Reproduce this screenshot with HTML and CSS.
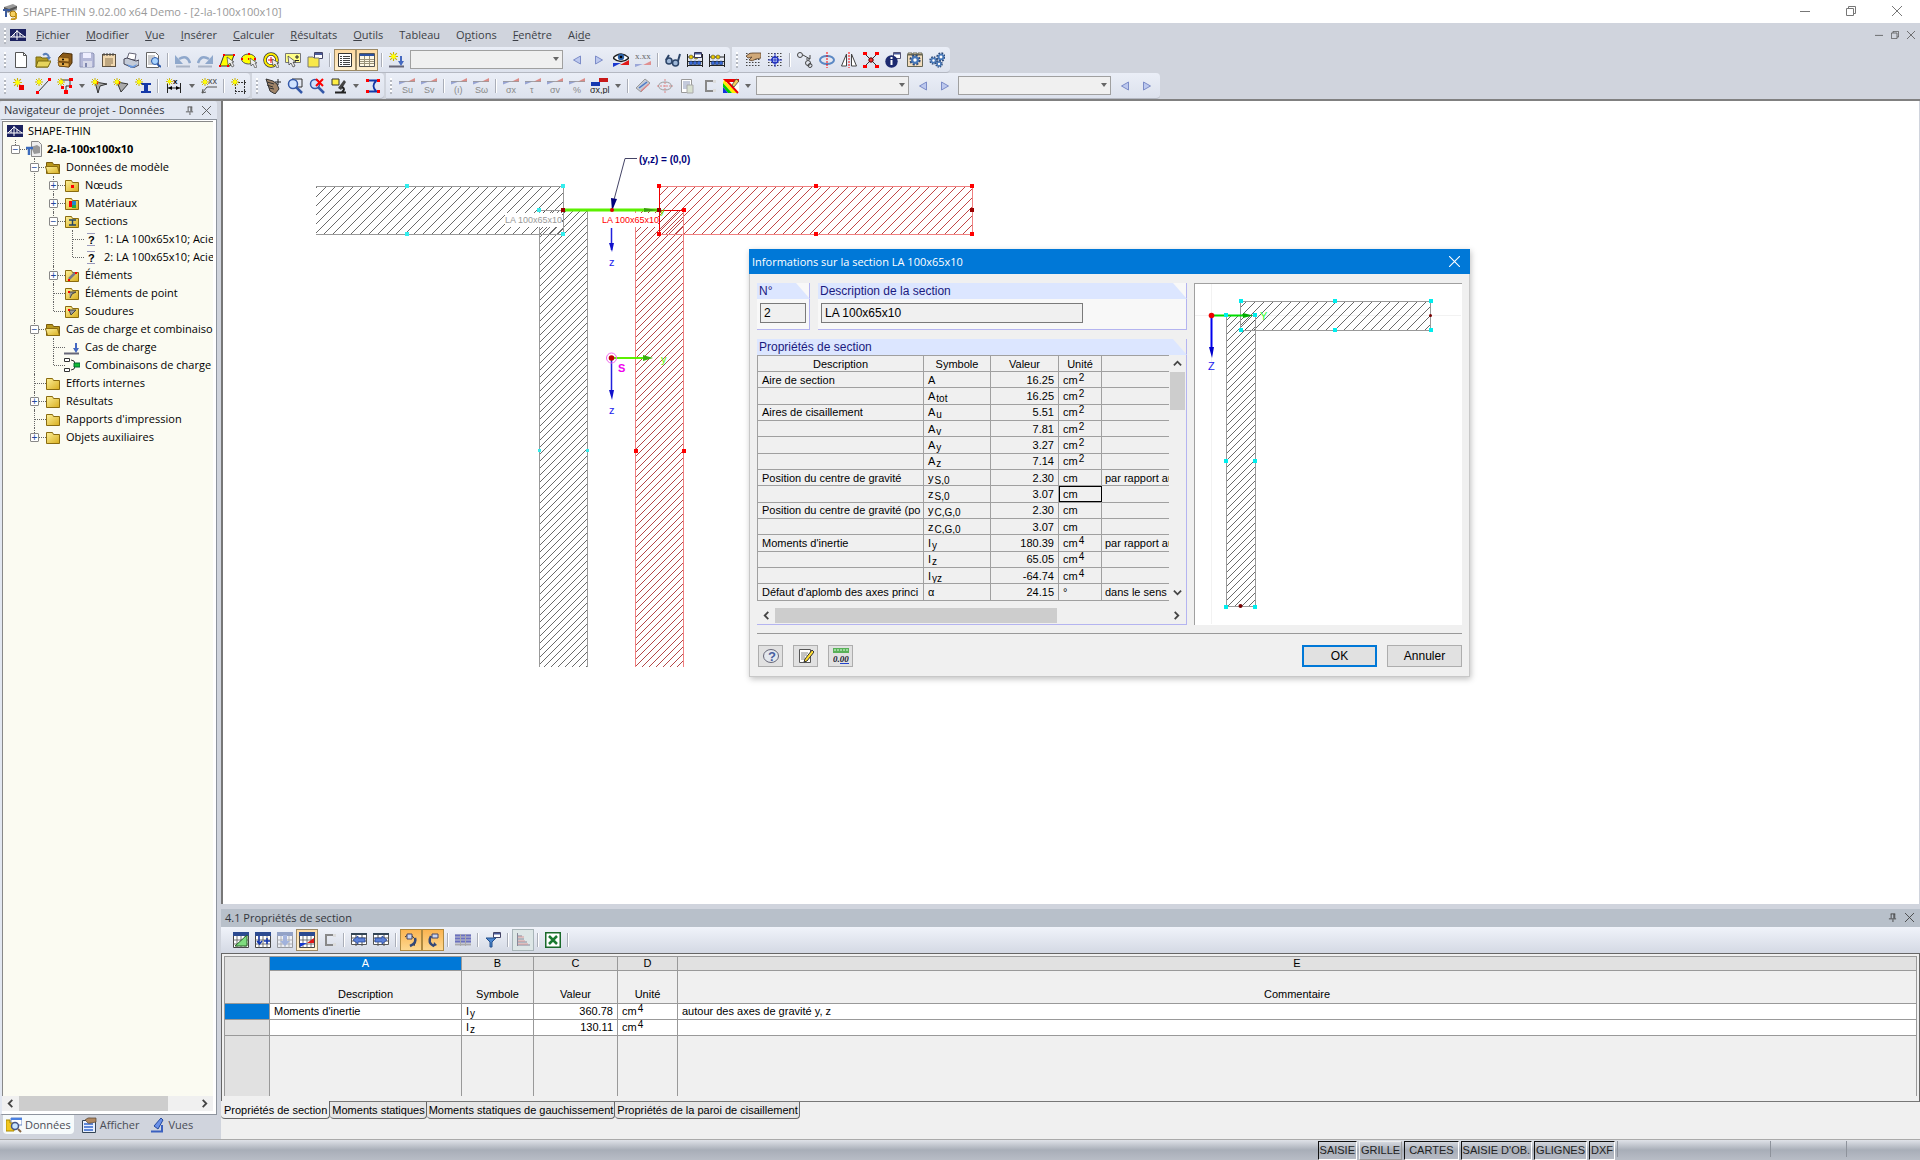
FILE: index.html
```html
<!DOCTYPE html>
<html lang="fr">
<head>
<meta charset="utf-8">
<title>SHAPE-THIN 9.02.00 x64 Demo - [2-la-100x100x10]</title>
<link rel="stylesheet" href="styles.css">
</head>
<body>
<svg class="paints" aria-hidden="true">
<defs>
<linearGradient id="gold" x1="0" y1="0" x2="1" y2="1"><stop offset="0" stop-color="#fdf09a"/><stop offset="1" stop-color="#d8ae1e"/></linearGradient>
<pattern id="hTop" width="9" height="9" patternUnits="userSpaceOnUse"><path d="M-1 1L1-1M0 9L9 0M8 10L10 8" stroke="#444" stroke-width=".8"/></pattern>
<pattern id="hSide" width="7" height="7" patternUnits="userSpaceOnUse"><path d="M-1 1L1-1M0 7L7 0M6 8L8 6" stroke="#444" stroke-width=".8"/></pattern>
<pattern id="rTop" width="9" height="9" patternUnits="userSpaceOnUse"><path d="M-1 1L1-1M0 9L9 0M8 10L10 8" stroke="#b01818" stroke-width=".8"/></pattern>
<pattern id="rSide" width="7" height="7" patternUnits="userSpaceOnUse"><path d="M-1 1L1-1M0 7L7 0M6 8L8 6" stroke="#a01818" stroke-width=".8"/></pattern>
</defs>
</svg>
<svg class="defs" aria-hidden="true">
<symbol id="logo" viewBox="0 0 16 12"><path fill="#1c2260" d="M0 0h16v12H0z"/><path d="M0 8h16M7 1v10M7 2L1 8M7 2l8 6M10 4v4M4 5v3" stroke="#fff" fill="none"/></symbol>
<symbol id="app" viewBox="0 0 16 16"><path fill="#9a9a9a" d="M2 3l9-3 4 2v4l-9 3-4-3z"/><path fill="#555" d="M2 3l5 2 8-3v2L7 8 2 6z"/><path d="M1 6h7M4 6v7" stroke="#3c5b9c" stroke-width="2"/><circle cx="11" cy="10" r="3" fill="#f6d060" stroke="#a87908"/><path d="M14 9v5q-2 2-5 1" fill="none" stroke="#c99a1e" stroke-width="2"/></symbol>
<symbol id="star" viewBox="0 0 8 8"><path d="M4 0v8M0 4h8M1 1l6 6M7 1L1 7" stroke="#c9b400" stroke-width="1"/><circle cx="4" cy="4" r="2" fill="#ff0"/></symbol>
<symbol id="new" viewBox="0 0 16 16"><path d="M2.500.5h8l3 3v12h-11z" fill="#fff" stroke="#555"/><path d="M10.500.5v3h3" fill="none" stroke="#555"/></symbol>
<symbol id="open" viewBox="0 0 16 16"><path d="M1 5h5l1 1h6v9H1z" fill="#b09a20" stroke="#7a6a10"/><path d="M3 9h13l-3 6H1z" fill="#e6d45c" stroke="#7a6a10"/><path d="M8 3q4-3 6 2" stroke="#5a80b8" stroke-width="2" fill="none"/><path d="M11 5h5l-2 3z" fill="#5a80b8"/></symbol>
<symbol id="box" viewBox="0 0 16 16"><path d="M2 5l4-4 9 1v9l-3 4-10-1z" fill="#8a5a18" stroke="#4a2e08"/><path d="M2 5l10 1v4L1 9zM1 10l11 1v4L2 14z" fill="#e0a848" stroke="#6a4008" stroke-width=".7"/><circle cx="6" cy="7.500" r="1"/><circle cx="6" cy="12" r="1"/></symbol>
<symbol id="save" viewBox="0 0 16 16"><path d="M1 1h13l1 1v13H1z" fill="#b4b8d8" stroke="#9096b8"/><path d="M4 1h8v5H4z" fill="#eef"/><path d="M4 9h9v6H4z" fill="#d8daea"/><path d="M6 11h2v4H6z" fill="#8088b0"/></symbol>
<symbol id="clip" viewBox="0 0 16 16"><rect x="1.500" y="2.500" width="13" height="12" fill="#f2d9b0" stroke="#5c5040"/><path d="M3 1v3M6 1v3M9 1v3M12 1v3" stroke="#444"/><path d="M4 7h8M4 9h8M4 11h8M4 13h6" stroke="#8a7450"/></symbol>
<symbol id="print" viewBox="0 0 16 16"><path d="M4 7L6 1l7 1-1 6z" fill="#fff" stroke="#667"/><path d="M1 7l3-1 9 3 3-1v5l-6 3-9-4z" fill="#c4cbd8" stroke="#445"/><path d="M3 12l7 2 4-2-2 3-4 1z" fill="#6a9ae0"/></symbol>
<symbol id="prev" viewBox="0 0 16 16"><path d="M1.500.5h9l3 3v12h-12z" fill="#fff" stroke="#666"/><path d="M3 4h7M3 6h5M3 8h4M3 10h4M3 12h6" stroke="#999"/><circle cx="10" cy="9" r="3.500" fill="#a8d4ff" stroke="#2c58a8"/><path d="M12 12l4 3" stroke="#2c58a8" stroke-width="2"/></symbol>
<symbol id="undo" viewBox="0 0 16 16"><path d="M4 7q8-5 11 4" fill="none" stroke="#8fa8cc" stroke-width="2.500"/><path d="M0 3v9h8z" fill="#8fa8cc"/><path d="M1 14.500h14" stroke="#aab4c6" stroke-width="2"/></symbol>
<symbol id="para" viewBox="0 0 16 16"><path d="M5 3h10l-4 11H1z" fill="#ff0" stroke="#333"/><path fill="red" d="M4 2h2v2H4zM14 2h2v2h-2zM0 13h2v2H0zM8 13h2v2H8z"/><path d="M8 5l1 8 2-2 2 4 2-1-2-4h2z" fill="#eee" stroke="#333" stroke-width=".6"/></symbol>
<symbol id="elli" viewBox="0 0 16 16"><ellipse cx="7.500" cy="7" rx="7" ry="5" fill="#ff0" stroke="#555"/><path fill="red" d="M0 6h2v2H0zM7 1h2v2H7zM13 6h2v2h-2zM7 6h1v2H7z"/><path d="M9 6l1 8 2-2 2 4 2-1-2-4h2z" fill="#eee" stroke="#333" stroke-width=".6"/></symbol>
<symbol id="targ" viewBox="0 0 16 16"><circle cx="8" cy="8" r="6" fill="#fff" stroke="#333" stroke-width="3.500"/><circle cx="8" cy="8" r="6" fill="none" stroke="#fe0" stroke-width="2"/><path d="M5 8h6M8 5v6" stroke="red"/><path d="M9 7l1 7 2-2 2 4 2-1-2-4h2z" fill="#eee" stroke="#333" stroke-width=".6"/></symbol>
<symbol id="plus" viewBox="0 0 16 16"><path d="M.5 1.500h15v9h-15z" fill="#ff8" stroke="#777"/><path d="M12 3v4M10 5h4M10 8.500h4" stroke="#222"/><path d="M3 4l1 9 2-2 2 4 2-1-2-4h3z" fill="#eee" stroke="#333" stroke-width=".7"/></symbol>
<symbol id="wins" viewBox="0 0 16 16"><path d="M7.500.5h8v6h-8z" fill="#fff" stroke="#446"/><path d="M8 1h7v2H8z" fill="#4a5a98"/><path d="M1 5h5l1 1h5v9H1z" fill="#f8e84a" stroke="#777"/></symbol>
<symbol id="list" viewBox="0 0 16 16"><path d="M1.500 1.500h13v13h-13z" fill="#fff" stroke="#333"/><path d="M3 4.500h2M3 6.500h2M3 8.500h2M3 10.500h2M3 12.500h2M6 4.500h7M6 6.500h7M6 8.500h7M6 10.500h7M6 12.500h7" stroke="#444"/></symbol>
<symbol id="table" viewBox="0 0 16 16"><path d="M.5 1.500h15v13H.5z" fill="#fff8e4" stroke="#555"/><path d="M1 2h14v2H1z" fill="#2c50a0"/><path d="M1 7.500h14M1 9.500h14M1 11.500h14M5.500 4v10M10.500 4v10" stroke="#9a927a"/></symbol>
<symbol id="load" viewBox="0 0 16 16"><path d="M0 14.500h15" stroke="#667" stroke-width="2"/><path d="M11 4h2v5h2l-3 5-3-5h2z" fill="#4468c0"/></symbol>
<symbol id="newload" viewBox="0 0 16 16"><use href="#load"/><use href="#star" width="9" height="9"/></symbol>
<symbol id="tl" viewBox="0 0 16 16"><path d="M11.500 4v8l-7-4z" fill="#bcc8ee" stroke="#7c8cc8"/></symbol>
<symbol id="tr" viewBox="0 0 16 16"><path d="M4.500 4v8l7-4z" fill="#bcc8ee" stroke="#7c8cc8"/></symbol>
<symbol id="eye" viewBox="0 0 16 16"><path d="M0 6q8-8 16 0-8 7-16 0" fill="#fff" stroke="#222" stroke-width="1.500"/><circle cx="8" cy="5" r="3.200" fill="#2a60a8"/><circle cx="8" cy="5" r="1.300"/><path d="M0 11h8L0 15z" fill="#1a38d0"/><path d="M16 8v5H7z" fill="#e01818"/></symbol>
<symbol id="xxx" viewBox="0 0 16 16"><text x="0" y="7" font-size="9" fill="#666" font-family="Liberation Serif">x.xx</text><path d="M0 12h8l-8 3z" fill="#9aa6d8"/><path d="M16 9v4H8z" fill="#e09090"/></symbol>
<symbol id="glas" viewBox="0 0 16 16"><circle cx="4" cy="9" r="3" fill="#9fb8d8" stroke="#2c4468" stroke-width="1.500"/><circle cx="10.500" cy="11" r="3" fill="#9fb8d8" stroke="#2c4468" stroke-width="1.500"/><path d="M1 8l3-5M13 9l2-7" stroke="#2c4468" stroke-width="2"/></symbol>
<symbol id="abac" viewBox="0 0 16 16"><path d="M.5 2v13M15.500 2v13M0 9.500h16M0 13.500h16M0 5h16" stroke="#222"/><g fill="#e8c800" stroke="#333" stroke-width=".5"><circle cx="4" cy="5" r="2"/><circle cx="9" cy="5" r="2"/></g><g fill="#3868d8" stroke="#123" stroke-width=".5"><circle cx="4" cy="11" r="2"/><circle cx="8" cy="11" r="2"/><circle cx="12" cy="11" r="2"/></g></symbol>
<symbol id="abac2" viewBox="0 0 16 16"><use href="#abac"/><path d="M7.500.5h7v5h-7z" fill="#fff" stroke="#335"/><path d="M8 1h6v1.500H8z" fill="#4a5a98"/></symbol>
<symbol id="dots" viewBox="0 0 16 16"><path d="M1 1.500h15M1 4.500h15M1 7.500h15M1 10.500h15M1 13.500h15" stroke="#444" stroke-width="1.200" stroke-dasharray="1.500 1.500"/></symbol>
<symbol id="hand" viewBox="0 0 16 16"><use href="#dots"/><path d="M1 4q4-4 8-3l7 0v5l-5 1q-4 3-7 1l3-3-4 1z" fill="#d0a878" stroke="#5a4028" stroke-width=".8"/></symbol>
<symbol id="snap" viewBox="0 0 16 16"><use href="#dots"/><circle cx="8" cy="8" r="3" fill="#dce8ff" stroke="#2030c0" stroke-width="1.500"/><path d="M8 1v14M1 8h14" stroke="#2030c0"/></symbol>
<symbol id="move" viewBox="0 0 16 16"><g fill="none" stroke="#444"><circle cx="3" cy="3" r="2.500"/><circle cx="11" cy="11" r="2.500"/><circle cx="13" cy="13.500" r="2"/><path d="M6 3l7 4M13 7V3M13 7H9"/></g></symbol>
<symbol id="rot" viewBox="0 0 16 16"><ellipse cx="8" cy="8" rx="7" ry="4" fill="none" stroke="#5b88c4" stroke-width="2"/><path d="M8 0v16" stroke="red" stroke-dasharray="2 1"/></symbol>
<symbol id="mirr" viewBox="0 0 16 16"><path d="M5.500 2v12H.5zM10.500 2v12h5z" fill="#fff" stroke="#444"/><path d="M8 0v16" stroke="red" stroke-dasharray="2 1"/></symbol>
<symbol id="cross" viewBox="0 0 16 16"><path d="M2 2l12 12M14 2L2 14" stroke="#333"/><path fill="red" d="M0 0h4v3H0zM12 0h4v3h-4zM0 13h4v3H0zM12 13h4v3h-4z"/><circle cx="8" cy="8" r="2.200" fill="#e33" stroke="#500"/></symbol>
<symbol id="info" viewBox="0 0 16 16"><path d="M8.500.5h7v6h-7z" fill="#fff" stroke="#557"/><path d="M9 1h6v1.500H9z" fill="#4a5a98"/><circle cx="6.500" cy="9.500" r="6.200" fill="#1c2a70"/><path d="M6.500 5v2M6.500 8v5" stroke="#fff" stroke-width="2"/></symbol>
<symbol id="gear" viewBox="0 0 16 16"><circle cx="8" cy="8" r="5.500" fill="none" stroke="#2a4878" stroke-width="4" stroke-dasharray="2.500 1.820"/><circle cx="8" cy="8" r="3.800" fill="#fff" stroke="#4878b8" stroke-width="3"/></symbol>
<symbol id="gbox" viewBox="0 0 16 16"><path d="M.5 2.500h15v12H.5zM1 1h4v2H1zM6 1h4v2H6zM11 1h4v2h-4z" fill="#f2dcbc" stroke="#665"/><use href="#gear" x="2" y="2" width="12" height="12"/></symbol>
<symbol id="gears" viewBox="0 0 16 16"><use href="#gear" x="0" y="4" width="9" height="9"/><use href="#gear" x="7" y="0" width="10" height="10"/><use href="#gear" x="6" y="8" width="8" height="8"/></symbol>
<symbol id="node" viewBox="0 0 16 16"><use href="#star" x="0" y="0" width="9" height="9"/><path d="M6 7h5v5H6z" fill="#e00"/></symbol>
<symbol id="line" viewBox="0 0 16 16"><path d="M3 14L14 2" stroke="#333"/><path fill="red" d="M13 0h3v3h-3zM1 13h3v3H1z"/><use href="#star" width="8" height="8"/></symbol>
<symbol id="poly" viewBox="0 0 16 16"><path d="M4 2h9v6H9v6" fill="none" stroke="#333"/><path fill="red" d="M12 0h4v3h-4zM12 7h3v3h-3zM7 12h4v4H7zM4 8h3v3H4z"/><use href="#star" y="0" width="8" height="8"/></symbol>
<symbol id="pe" viewBox="0 0 16 16"><path d="M4 4l12 2-7 2-2 7z" fill="#aaa" stroke="#333"/><path d="M3 3h4v3H3z" fill="red"/><use href="#star" width="8" height="8"/></symbol>
<symbol id="weld" viewBox="0 0 16 16"><path d="M4 4l11 2-7 8z" fill="#aaa" stroke="#333"/><path d="M3 3h4v3H3z" fill="red"/><use href="#star" width="8" height="8"/></symbol>
<symbol id="ibeam" viewBox="0 0 16 16"><path d="M6 5h10v2h-3v6h3v2H6v-2h3V7H6z" fill="#1438a8"/><use href="#star" width="8" height="8"/></symbol>
<symbol id="dim" viewBox="0 0 16 16"><path d="M1.500 5v10M14.500 5v10M2 10h12" stroke="#222"/><path d="M2 10l4-2v4zM14 10l-4-2v4z"/><text x="7" y="6" font-size="8" font-weight="bold" font-family="Liberation Sans">x</text><use href="#star" width="7" height="7"/></symbol>
<symbol id="note" viewBox="0 0 16 16"><path d="M1 15l5-6h10M1 15l1-4M1 15l4-1" stroke="#555" fill="none"/><text x="7" y="6" font-size="9" fill="#444" font-family="Liberation Sans">xx</text><use href="#star" width="8" height="8"/></symbol>
<symbol id="frame" viewBox="0 0 16 16"><path d="M4 4.500h11M4 13.500h12M4.500 3v13M13.500 2v14" stroke="#333" stroke-dasharray="2 1"/><use href="#star" width="8" height="8"/></symbol>
<symbol id="pan" viewBox="0 0 16 16"><path d="M1 1l7 2 4 3 2 5-4 5-5-3z" fill="#a08468" stroke="#333"/><path d="M2 4l7 2M2 7l6 2M4 10l5 1" stroke="#333"/><path d="M13 1v6M10 4h6" stroke="#222"/></symbol>
<symbol id="zoom" viewBox="0 0 16 16"><path d="M5 1h10v8H5z" fill="none" stroke="#333"/><circle cx="6" cy="6" r="4.500" fill="#cfe2ff" stroke="#3458a8" stroke-width="1.500"/><path d="M9 9l6 6" stroke="#3458a8" stroke-width="2.500"/></symbol>
<symbol id="zoomx" viewBox="0 0 16 16"><circle cx="6" cy="6" r="4.500" fill="#cfe2ff" stroke="#3458a8" stroke-width="1.500"/><path d="M9 9l6 6" stroke="#3458a8" stroke-width="2.500"/><path d="M7 1l7 7M14 1L7 8" stroke="red" stroke-width="2"/></symbol>
<symbol id="scope" viewBox="0 0 16 16"><path d="M1 1h7v6H1z" fill="#fe4" stroke="#333"/><path d="M13 2L7 10l3 2 5-8z" fill="#444"/><path d="M4 14.500h11M11 9q4 2 0 5" stroke="#222" stroke-width="2" fill="none"/></symbol>
<symbol id="sect" viewBox="0 0 16 16"><path d="M3 2.500h10M3 13.500h10M11 3q-5 5 0 10" stroke="#1438a8" stroke-width="1.800" fill="none"/><path fill="red" d="M1 1h3v3H1zM12 1h3v3h-3zM1 12h3v3H1zM12 12h3v3h-3z"/></symbol>
<symbol id="wedge" viewBox="0 0 16 16"><path d="M0 3h9L0 6.500z" fill="#98a4d4"/><path d="M16 0v4H8z" fill="#dc8c88"/><path d="M0 3.500h16" stroke="#999" stroke-width=".8"/></symbol>
<symbol id="pl" viewBox="0 0 20 16"><path d="M1 4h9v4H1z" fill="#1438b0"/><path d="M9 0h9v4H9z" fill="#c81818"/><text x="0" y="15" font-size="9" fill="#222" font-family="Liberation Sans">σx,pl</text></symbol>
<symbol id="ruler" viewBox="0 0 16 16"><path d="M1 10L10 1l5 4-9 9z" fill="#c4cad6" stroke="#999"/><path d="M4 10l8-6" stroke="#4878c8" stroke-width="1.500"/><path d="M6 13l8-7" stroke="#d88" stroke-width="1.500"/></symbol>
<symbol id="aim" viewBox="0 0 16 16"><ellipse cx="8" cy="8" rx="6.500" ry="4" fill="none" stroke="#999"/><path d="M8 1v14M0 8h16" stroke="#d88" stroke-dasharray="2 1"/></symbol>
<symbol id="rep" viewBox="0 0 16 16"><path d="M2.500 1.500h10v13h-10z" fill="#fff" stroke="#999"/><path d="M4 4h7M4 6h7M4 8h7M4 10h7" stroke="#8a96b8"/><path d="M8 7h6v8H8z" fill="#d8e0d0" stroke="#aaa"/></symbol>
<symbol id="chan" viewBox="0 0 16 16"><path d="M13 3H5v10h8" fill="none" stroke="#888" stroke-width="2"/><path d="M12 2h3v3h-3zM12 11h3v3h-3z" fill="#ddd"/></symbol>
<symbol id="color" viewBox="0 0 16 16"><path fill="#fff" d="M0 1h16v14H0z"/><path fill="#e00" d="M0 1h7l-1 3zM0 1h16v3H2z"/><path fill="#fe0" d="M1 2l13 13h-5L0 5z"/><path fill="#0c0" d="M0 5l9 10H5L0 9z"/><path fill="#1030e0" d="M0 9l5 6H0z"/><path d="M3 2l12 13" stroke="#e00" stroke-width="2"/><path d="M9 7l4-6 3 2-5 6z" fill="#f4d060" stroke="#333" stroke-width=".7"/></symbol>
<symbol id="fold" viewBox="0 0 16 16"><path d="M1.500 3.500h6l1 2h6v9h-13z" fill="url(#gold)" stroke="#8a6c10"/></symbol>
<symbol id="foldo" viewBox="0 0 16 16"><path d="M1.500 3.500h6l1 2h6v9h-13z" fill="#b8971c" stroke="#7a5c0c"/><path d="M.5 7.500h12l2 7h-12z" fill="url(#gold)" stroke="#8a6c10"/></symbol>
<symbol id="fnode" viewBox="0 0 16 16"><use href="#fold"/><path d="M7 8h3v3H7z" fill="red"/></symbol>
<symbol id="fmat" viewBox="0 0 16 16"><use href="#fold"/><path d="M5 6h3v6H5z" fill="red"/><path d="M8 6h4v4H8z" fill="#28c"/><path d="M8 10h4v3H8z" fill="#2a4"/></symbol>
<symbol id="fsec" viewBox="0 0 16 16"><use href="#fold"/><path d="M5 7h7M5 12h7M8.500 7v5" stroke="#246" stroke-width="1.400"/></symbol>
<symbol id="felm" viewBox="0 0 16 16"><use href="#fold"/><path d="M5 12l6-6" stroke="#778" stroke-width="2.500"/><path fill="red" d="M4 12h2v2H4zM11 5h2v2h-2z"/></symbol>
<symbol id="fpt" viewBox="0 0 16 16"><use href="#fold"/><path d="M5 7l7 0-4 2-2 4" stroke="#444" fill="#999"/><path fill="red" d="M4 6h2v2H4z"/></symbol>
<symbol id="fweld" viewBox="0 0 16 16"><use href="#fold"/><path d="M5 7h7l-5 5z" stroke="#444" fill="#999"/><path fill="red" d="M4 6h2v2H4z"/></symbol>
<symbol id="model" viewBox="0 0 16 16"><path d="M5.500.5h7l3 3v12h-10z" fill="#eee" stroke="#888"/><path d="M5 6l6-2 3 2v6l-6 1z" fill="#999"/><path d="M0 7h7M3 7v7" stroke="#3c6bbc" stroke-width="2.500"/></symbol>
<symbol id="qi" viewBox="0 0 16 16"><path d="M4 2.500h8M4 14.500h8" stroke="#99b"/><text x="5" y="13" font-size="11" font-weight="bold" font-family="Liberation Sans">?</text></symbol>
<symbol id="comb" viewBox="0 0 16 16"><path d="M.5 1.500h5v3h-5zM.5 11.500h5v3h-5z" fill="#fff" stroke="#333"/><path d="M7 3q4 0 4 4M7 13q4 0 4-4" stroke="#333" fill="none"/><path d="M10 6h6v4h-6z" fill="#1b3" stroke="#063"/></symbol>
<symbol id="gtri" viewBox="0 0 16 16"><path d="M.5.5h15v15H.5z" fill="#fff" stroke="#444"/><path d="M0 0h16v4H0z" fill="#2c4a90"/><path d="M0 8h16M0 12h16M4 4v12M8 4v12M12 4v12" stroke="#555" stroke-width=".8"/></symbol>
<symbol id="g1" viewBox="0 0 16 16"><use href="#gtri"/><path d="M2 14L14 3v11z" fill="#7fdc7f" stroke="#286028"/></symbol>
<symbol id="g2" viewBox="0 0 16 16"><use href="#gtri"/><path d="M4 4v7M2 9l2.500 3L7 9M9 9h6M12 6v6" stroke="#1438b0" stroke-width="1.500" fill="none"/></symbol>
<symbol id="g3" viewBox="0 0 16 16"><g opacity=".45"><use href="#gtri"/><path d="M6 3h4v6h3l-5 5-5-5h3z" fill="#5878c8"/></g></symbol>
<symbol id="g4" viewBox="0 0 16 16"><use href="#gtri"/><path d="M1 11h7l-7 4z" fill="#1438d0"/><path d="M15 6v5H8z" fill="#e01818"/></symbol>
<symbol id="gl" viewBox="0 0 16 16"><path d="M.5 2.500h15v10H.5zM0 6h16M5 2v12M11 2v12M0 9h16" fill="#fff" stroke="#555"/><path d="M0 1h16v2H0z" fill="#345"/><path d="M2 8l5-4v2h7v4H7v2z" fill="#5a80d8" stroke="#1c3c90" stroke-width=".7"/></symbol>
<symbol id="gr" viewBox="0 0 16 16"><g transform="translate(16 0) scale(-1 1)"><use href="#gl" width="16" height="16"/></g></symbol>
<symbol id="a1" viewBox="0 0 16 16"><path d="M2 5l4-3 4 3M6 3q9 2 5 11" fill="none" stroke="#333"/><path d="M4 2h5v5H4z" fill="#c8d4f0" stroke="#446"/><path d="M12 6q2 5-5 8" fill="none" stroke="#334878" stroke-width="2.500"/></symbol>
<symbol id="a2" viewBox="0 0 16 16"><path d="M7 2h6v4H7z" fill="#c8d4f0" stroke="#446"/><path d="M6 4q-4 7 3 10" fill="none" stroke="#334878" stroke-width="2.500"/><path d="M9 10l3 3-4 2z" fill="#334878"/></symbol>
<symbol id="stripe" viewBox="0 0 16 16"><path d="M0 2h16v12H0z" fill="#c4c6d0"/><path d="M0 3.500h16M0 6.500h16M0 9.500h16" stroke="#6a70c0" stroke-width="2"/><path d="M5.500 2v12M10.500 2v12M0 12.500h16" stroke="#aaa"/></symbol>
<symbol id="filt" viewBox="0 0 16 16"><path d="M8.500.5h7v5h-7z" fill="#fff" stroke="#446"/><path d="M9 1h6v1.500H9z" fill="#4a5a98"/><path d="M1 6h10l-4 4v5H5v-5z" fill="#4a86d0" stroke="#24508c"/></symbol>
<symbol id="chart" viewBox="0 0 16 16"><path d="M2.500 1v13M2 4h5M2 7h7M2 10h10M2 13h13" stroke="#889"/><path d="M3 5h6M3 9h7M3 12h10" stroke="#d99"/></symbol>
<symbol id="xls" viewBox="0 0 16 16"><path d="M.5.500h15v15H.5z" fill="#fff" stroke="#1a6a2a" stroke-width="2"/><path d="M4 4l8 8M12 4l-8 8" stroke="#1a7a30" stroke-width="2.500"/></symbol>
<symbol id="ndata" viewBox="0 0 16 16"><path d="M5 1h11v7H5z" fill="#fff" stroke="#68c"/><path d="M5 1h11v2H5z" fill="#4a80e0"/><path d="M0 3h4v3h4v8H0z" fill="#f2c820" stroke="#a80"/><circle cx="9" cy="9" r="3.500" fill="#c8e4ff" stroke="#458" stroke-width="1.500"/><path d="M12 12l3 3" stroke="#864" stroke-width="2"/></symbol>
<symbol id="nshow" viewBox="0 0 16 16"><path d="M1.500 3.500h13v12h-13z" fill="#e8f0ff" stroke="#345"/><path d="M3 7h9M3 10h9M3 13h9" stroke="#36c" stroke-width="1.500"/><path d="M4 3q3-3 6-2h5v4l-5 1q-3 1-4-1z" fill="#b08860" stroke="#543" stroke-width=".7"/></symbol>
<symbol id="nview" viewBox="0 0 16 16"><path d="M11 1L4 9l4 3 5-9z" fill="#6a90e8" stroke="#24489c"/><path d="M1 14.500h12M12 8v6" stroke="#3a60c0" stroke-width="2"/></symbol>
<symbol id="help" viewBox="0 0 16 16"><ellipse cx="8" cy="8" rx="7.500" ry="6.500" fill="#e4e8ee" stroke="#667"/><text x="5" y="13" font-size="13" font-weight="bold" fill="#4860a0" font-family="Liberation Sans">?</text></symbol>
<symbol id="edit" viewBox="0 0 16 16"><path d="M1.500 1.500h11v13h-11z" fill="#fff" stroke="#555"/><path d="M3 5h7M3 7h6M3 9h4M3 11h4" stroke="#888"/><path d="M14 2l2 2-7 9-3 1 1-3z" fill="#fd3" stroke="#333"/></symbol>
<symbol id="dec" viewBox="0 0 16 16"><path d="M0 0h16v5H0z" fill="#58b058"/><path d="M2 1v2M5 1v2M8 1v2M11 1v2M14 1v2" stroke="#dfd"/><text x="0" y="14" font-size="9" font-style="italic" font-weight="bold" fill="#223" font-family="Liberation Serif">0.00</text><path d="M7 15.500h9" stroke="#24c"/></symbol>
<symbol id="min" viewBox="0 0 10 10"><path d="M0 5.500h10" stroke="currentColor"/></symbol>
<symbol id="max" viewBox="0 0 10 10"><path d="M.5 2.500h7v7h-7zM2.500 2.500v-2h7v7h-2" fill="none" stroke="currentColor"/></symbol>
<symbol id="x" viewBox="0 0 10 10"><path d="M0 0l10 10M10 0L0 10" stroke="currentColor"/></symbol>
<symbol id="pin" viewBox="0 0 10 10"><path d="M3 1h5M3.500 1v5M6.500 1v5M7.500 1v5M1 6.500h8M5.500 7v3" stroke="currentColor" fill="none"/></symbol>
<symbol id="cl" viewBox="0 0 10 10"><path d="M7 1L3 5l4 4" stroke="#444" stroke-width="2" fill="none"/></symbol>
<symbol id="cr" viewBox="0 0 10 10"><path d="M3 1l4 4-4 4" stroke="#444" stroke-width="2" fill="none"/></symbol>
<symbol id="cu" viewBox="0 0 10 10"><path d="M1 7l4-4 4 4" stroke="#444" stroke-width="2" fill="none"/></symbol>
<symbol id="cd" viewBox="0 0 10 10"><path d="M1 3l4 4 4-4" stroke="#444" stroke-width="2" fill="none"/></symbol>
</svg>

<header class="titlebar">
  <svg class="ic"><use href="#app"/></svg>
  <span class="title">SHAPE-THIN 9.02.00 x64 Demo - [2-la-100x100x10]</span>
  <button class="cap" aria-label="Réduire"><svg><use href="#min"/></svg></button>
  <button class="cap" aria-label="Restaurer"><svg><use href="#max"/></svg></button>
  <button class="cap" aria-label="Fermer"><svg><use href="#x"/></svg></button>
</header>

<nav class="menubar">
  <span class="grip"></span>
  <svg class="logo"><use href="#logo"/></svg>
  <button><u>F</u>ichier</button><button><u>M</u>odifier</button><button><u>V</u>ue</button><button><u>I</u>nsérer</button><button><u>C</u>alculer</button><button><u>R</u>ésultats</button><button><u>O</u>utils</button><button>Tableau</button><button>O<u>p</u>tions</button><button><u>F</u>enêtre</button><button>Ai<u>d</u>e</button>
  <span class="mdi"><svg><use href="#min"/></svg><svg><use href="#max"/></svg><svg><use href="#x"/></svg></span>
</nav>

<div class="bars">
<div class="barrow">
  <div class="bar"><span class="grip"></span>
    <button class="tb" aria-label="Nouveau"><svg><use href="#new"/></svg></button><button class="tb" aria-label="Ouvrir"><svg><use href="#open"/></svg></button><button class="tb" aria-label="Projets"><svg><use href="#box"/></svg></button><button class="tb" aria-label="Enregistrer"><svg><use href="#save"/></svg></button><button class="tb" aria-label="Presse-papiers"><svg><use href="#clip"/></svg></button><button class="tb" aria-label="Imprimer"><svg><use href="#print"/></svg></button><button class="tb" aria-label="Aperçu"><svg><use href="#prev"/></svg></button>
    <i class="sep"></i>
    <button class="tb" aria-label="Annuler"><svg><use href="#undo"/></svg></button><button class="tb flip" aria-label="Rétablir"><svg><use href="#undo"/></svg></button><button class="tb" aria-label="Sélection losange"><svg><use href="#para"/></svg></button><button class="tb" aria-label="Sélection ellipse"><svg><use href="#elli"/></svg></button><button class="tb" aria-label="Sélection anneau"><svg><use href="#targ"/></svg></button><button class="tb" aria-label="Sélection spéciale"><svg><use href="#plus"/></svg></button><button class="tb" aria-label="Fenêtres"><svg><use href="#wins"/></svg></button>
    <i class="sep"></i>
    <button class="tb on" aria-label="Navigateur"><svg><use href="#list"/></svg></button><button class="tb on" aria-label="Tableaux"><svg><use href="#table"/></svg></button>
    <i class="sep"></i>
    <button class="tb" aria-label="Nouveau cas"><svg><use href="#newload"/></svg></button>
    <span class="combo"><select aria-label="Cas de charge"></select></span>
    <button class="tb" aria-label="Précédent"><svg><use href="#tl"/></svg></button><button class="tb" aria-label="Suivant"><svg><use href="#tr"/></svg></button><button class="tb" aria-label="Afficher résultats"><svg><use href="#eye"/></svg></button><button class="tb" aria-label="Valeurs"><svg><use href="#xxx"/></svg></button>
    <i class="sep"></i>
    <button class="tb" aria-label="Lunettes"><svg><use href="#glas"/></svg></button><button class="tb" aria-label="Calculer tout"><svg><use href="#abac2"/></svg></button><button class="tb" aria-label="Calculer"><svg><use href="#abac"/></svg></button>
  </div>
  <div class="bar"><span class="grip"></span>
    <button class="tb" aria-label="Grille"><svg><use href="#hand"/></svg></button><button class="tb" aria-label="Accrochage"><svg><use href="#snap"/></svg></button>
    <i class="sep"></i>
    <button class="tb" aria-label="Déplacer"><svg><use href="#move"/></svg></button><button class="tb" aria-label="Rotation"><svg><use href="#rot"/></svg></button><button class="tb" aria-label="Miroir"><svg><use href="#mirr"/></svg></button><button class="tb" aria-label="Relier"><svg><use href="#cross"/></svg></button><button class="tb" aria-label="Informations"><svg><use href="#info"/></svg></button><button class="tb" aria-label="Configuration"><svg><use href="#gbox"/></svg></button><button class="tb" aria-label="Options"><svg><use href="#gears"/></svg></button>
  </div>
</div>
<div class="barrow">
  <div class="bar"><span class="grip"></span>
    <button class="tb" aria-label="Nœud"><svg><use href="#node"/></svg></button><button class="tb" aria-label="Ligne"><svg><use href="#line"/></svg></button><button class="tb" aria-label="Polyligne"><svg><use href="#poly"/></svg></button><i class="drop"></i><button class="tb" aria-label="Élément de point"><svg><use href="#pe"/></svg></button><button class="tb" aria-label="Soudure"><svg><use href="#weld"/></svg></button><button class="tb" aria-label="Section"><svg><use href="#ibeam"/></svg></button>
    <i class="sep"></i>
    <button class="tb wide" aria-label="Cotation"><svg><use href="#dim"/></svg></button><i class="drop"></i><button class="tb" aria-label="Commentaire"><svg><use href="#note"/></svg></button>
    <i class="sep"></i>
    <button class="tb" aria-label="Cadre"><svg><use href="#frame"/></svg></button>
  </div>
  <div class="bar"><span class="grip"></span>
    <button class="tb" aria-label="Panoramique"><svg><use href="#pan"/></svg></button><button class="tb" aria-label="Zoom"><svg><use href="#zoom"/></svg></button><button class="tb" aria-label="Zoom annulé"><svg><use href="#zoomx"/></svg></button><button class="tb" aria-label="Vue"><svg><use href="#scope"/></svg></button><i class="drop"></i><button class="tb" aria-label="Profilé"><svg><use href="#sect"/></svg></button>
  </div>
  <div class="bar"><span class="grip"></span>
    <button class="tb sig"><svg><use href="#wedge"/><text x="3" y="15">Su</text></svg></button><button class="tb sig"><svg><use href="#wedge"/><text x="3" y="15">Sv</text></svg></button>
    <i class="sep"></i>
    <button class="tb sig"><svg><use href="#wedge"/><text x="3" y="15">(ı)</text></svg></button><button class="tb sig"><svg><use href="#wedge"/><text x="2" y="15">Sω</text></svg></button>
    <i class="sep"></i>
    <button class="tb sig"><svg><use href="#wedge"/><text x="3" y="15">σx</text></svg></button><button class="tb sig"><svg><use href="#wedge"/><text x="5" y="15">τ</text></svg></button><button class="tb sig"><svg><use href="#wedge"/><text x="3" y="15">σv</text></svg></button><button class="tb sig"><svg><use href="#wedge"/><text x="4" y="15">%</text></svg></button><button class="tb wide" aria-label="Plastique"><svg><use href="#pl"/></svg></button><i class="drop"></i>
    <i class="sep"></i>
    <button class="tb" aria-label="Règle"><svg><use href="#ruler"/></svg></button><button class="tb" aria-label="Centre"><svg><use href="#aim"/></svg></button><button class="tb" aria-label="Rapport"><svg><use href="#rep"/></svg></button><button class="tb" aria-label="Contour"><svg><use href="#chan"/></svg></button><button class="tb" aria-label="Couleurs"><svg><use href="#color"/></svg></button><i class="drop"></i>
    <span class="combo"><select aria-label="Élément"></select></span>
    <button class="tb" aria-label="Précédent"><svg><use href="#tl"/></svg></button><button class="tb" aria-label="Suivant"><svg><use href="#tr"/></svg></button>
    <span class="combo"><select aria-label="Position"></select></span>
    <button class="tb" aria-label="Précédent"><svg><use href="#tl"/></svg></button><button class="tb" aria-label="Suivant"><svg><use href="#tr"/></svg></button>
  </div>
</div>
</div>

<div class="work">
<aside class="navi">
  <div class="navhead"><span>Navigateur de projet - Données</span><svg><use href="#pin"/></svg><svg><use href="#x"/></svg></div>
  <div class="treebox">
    <div class="tree">
      <div class="row root"><svg class="logo"><use href="#logo"/></svg>SHAPE-THIN</div>
      <ul>
        <li><div class="row"><i class="ex">−</i><svg class="ic"><use href="#model"/></svg><b>2-la-100x100x10</b></div>
        <ul>
          <li><div class="row"><i class="ex">−</i><svg class="ic"><use href="#foldo"/></svg>Données de modèle</div>
          <ul>
            <li><div class="row"><i class="ex">+</i><svg class="ic"><use href="#fnode"/></svg>Nœuds</div></li>
            <li><div class="row"><i class="ex">+</i><svg class="ic"><use href="#fmat"/></svg>Matériaux</div></li>
            <li><div class="row"><i class="ex">−</i><svg class="ic"><use href="#fsec"/></svg>Sections</div>
            <ul>
              <li><div class="row leaf"><svg class="ic"><use href="#qi"/></svg>1: LA 100x65x10; Acie</div></li>
              <li><div class="row leaf"><svg class="ic"><use href="#qi"/></svg>2: LA 100x65x10; Acie</div></li>
            </ul></li>
            <li><div class="row"><i class="ex">+</i><svg class="ic"><use href="#felm"/></svg>Éléments</div></li>
            <li><div class="row leaf"><svg class="ic"><use href="#fpt"/></svg>Éléments de point</div></li>
            <li><div class="row leaf"><svg class="ic"><use href="#fweld"/></svg>Soudures</div></li>
          </ul></li>
          <li><div class="row"><i class="ex">−</i><svg class="ic"><use href="#foldo"/></svg>Cas de charge et combinaiso</div>
          <ul>
            <li><div class="row leaf"><svg class="ic"><use href="#load"/></svg>Cas de charge</div></li>
            <li><div class="row leaf"><svg class="ic"><use href="#comb"/></svg>Combinaisons de charge</div></li>
          </ul></li>
          <li><div class="row leaf"><svg class="ic"><use href="#fold"/></svg>Efforts internes</div></li>
          <li><div class="row"><i class="ex">+</i><svg class="ic"><use href="#fold"/></svg>Résultats</div></li>
          <li><div class="row leaf"><svg class="ic"><use href="#fold"/></svg>Rapports d'impression</div></li>
          <li><div class="row"><i class="ex">+</i><svg class="ic"><use href="#fold"/></svg>Objets auxiliaires</div></li>
        </ul></li>
      </ul>
    </div>
    <div class="hscroll"><svg><use href="#cl"/></svg><span class="thumb"></span><svg><use href="#cr"/></svg></div>
  </div>
  <div class="navtabs">
    <button class="cur"><svg class="ic"><use href="#ndata"/></svg>Données</button><button><svg class="ic"><use href="#nshow"/></svg>Afficher</button><button><svg class="ic"><use href="#nview"/></svg>Vues</button>
  </div>
</aside>

<main class="right">
  <section class="canvas">
    <svg class="drawing" width="800" height="600" viewBox="223 101 800 600">
      <path d="M316 186h247v48H316z" fill="url(#hTop)"/>
      <path d="M539.500 210h48v457h-48z" fill="url(#hSide)"/>
      <path d="M316 186.500h247.500v48H316M539.500 210v457M587.500 210v457M539 210.500h24" fill="none" stroke="#999"/>
      <path d="M659 186h313v48H659z" fill="url(#rTop)"/>
      <path d="M635.500 210h48v457h-48z" fill="url(#rSide)"/>
      <path d="M659.500 186.500h313v48h-313zM635.500 210v457M683.500 210v457" fill="none" stroke="#f08080"/>
      <path d="M659.500 186v48M659 210.500h25" stroke="#e00"/>
      <path d="M505 213h57v14h-57zM602 213h56v14h-56z" fill="#fff"/>
      <text x="505" y="223" class="lab" fill="#999">LA 100x65x10</text>
      <text x="602" y="223" class="lab" fill="#f00">LA 100x65x10</text>
      <path d="M563 210h97" stroke="#5cf000" stroke-width="3"/>
      <path d="M644 208l14 2-14 2z" fill="#3a9a10"/>
      <text x="660" y="214" class="lab" fill="#5cf000">y</text>
      <path fill="#3ee" d="M405 184h4v4h-4zM405 232h4v4h-4zM561 184h4v4h-4zM561 232h4v4h-4zM537 208h4v4h-4zM538 449h3v3h-3zM586 449h3v3h-3z"/>
      <path fill="#f00" d="M657 184h4v4h-4zM657 232h4v4h-4zM682 208h4v4h-4zM814 184h4v4h-4zM814 232h4v4h-4zM970 184h4v4h-4zM970 232h4v4h-4zM634 449h4v4h-4zM682 449h4v4h-4z"/>
      <path fill="#900" d="M561 208h4v4h-4zM657 208h4v4h-4zM970 208h4v4h-4z"/>
      <path d="M637 158.500h-12l-12 45" fill="none" stroke="#446" /><path d="M611 198l6 1-5 12z" fill="#00007c"/>
      <text x="639" y="163" class="org">(y,z) = (0,0)</text>
      <circle cx="612" cy="210" r="2" fill="#d00"/>
      <path d="M611.500 228v22M611.500 358v36" stroke="#22d" stroke-width="1.500"/>
      <path d="M609 243h5l-2 9zM609 390h5l-2 10z" fill="#11c"/>
      <text x="609" y="266" class="ax" fill="#22e">z</text><text x="609" y="414" class="ax" fill="#22e">z</text>
      <path d="M612 358h38" stroke="#5cf000" stroke-width="2"/><path d="M643 355l10 3-10 3z" fill="#3ab010"/>
      <circle cx="611.500" cy="358" r="5" fill="none" stroke="#e6e"/><circle cx="611.500" cy="358" r="2.800" fill="#c00000"/>
      <text x="661" y="363" class="ax" fill="#5cf000">y</text><text x="618" y="372" class="cg">S</text>
    </svg>
  </section>

  <section class="panel">
    <div class="phead"><span>4.1 Propriétés de section</span><svg><use href="#pin"/></svg><svg><use href="#x"/></svg></div>
    <div class="ptools">
      <button class="tb" aria-label="Éditer"><svg><use href="#g1"/></svg></button><button class="tb" aria-label="Ajouter"><svg><use href="#g2"/></svg></button><button class="tb" aria-label="Descendre"><svg><use href="#g3"/></svg></button><button class="tb on" aria-label="Résultats"><svg><use href="#g4"/></svg></button><button class="tb" aria-label="Profil"><svg><use href="#chan"/></svg></button><i class="sep"></i>
      <button class="tb" aria-label="Tableau précédent"><svg><use href="#gl"/></svg></button><button class="tb" aria-label="Tableau suivant"><svg><use href="#gr"/></svg></button><i class="sep"></i>
      <button class="tb sel" aria-label="Synchroniser"><svg><use href="#a1"/></svg></button><button class="tb sel" aria-label="Sélectionner"><svg><use href="#a2"/></svg></button><i class="sep"></i>
      <button class="tb" aria-label="Lignes"><svg><use href="#stripe"/></svg></button><i class="sep"></i>
      <button class="tb" aria-label="Filtre"><svg><use href="#filt"/></svg></button><i class="sep"></i>
      <button class="tb pale" aria-label="Diagramme"><svg><use href="#chart"/></svg></button><i class="sep"></i>
      <button class="tb" aria-label="Excel"><svg><use href="#xls"/></svg></button><i class="sep"></i>
    </div>
    <div class="gridbox">
    <table class="grid">
      <colgroup><col class="g0"><col class="gA"><col class="gB"><col class="gC"><col class="gD"><col></colgroup>
      <thead>
        <tr class="letters"><th class="rh" rowspan="2"></th><th class="act">A</th><th>B</th><th>C</th><th>D</th><th>E</th></tr>
        <tr class="names"><th>Description</th><th>Symbole</th><th>Valeur</th><th>Unité</th><th>Commentaire</th></tr>
      </thead>
      <tbody>
        <tr><td class="rh act"></td><td>Moments d'inertie</td><td>I<sub>y</sub></td><td class="num">360.78</td><td>cm<sup>4</sup></td><td>autour des axes de gravité y, z</td></tr>
        <tr><td class="rh"></td><td></td><td>I<sub>z</sub></td><td class="num">130.11</td><td>cm<sup>4</sup></td><td></td></tr>
        <tr class="empty"><td class="rh"></td><td></td><td></td><td></td><td></td><td></td></tr>
      </tbody>
    </table>
    </div>
    <div class="tabs"><button class="cur">Propriétés de section</button><button>Moments statiques</button><button>Moments statiques de gauchissement</button><button>Propriétés de la paroi de cisaillement</button></div>
  </section>
</main>

<div class="dialog" role="dialog" aria-label="Informations sur la section">
  <div class="dhead"><span>Informations sur la section LA 100x65x10</span><button aria-label="Fermer"><svg><use href="#x"/></svg></button></div>
  <div class="dbody">
    <div class="dleft">
      <div class="pair">
        <div class="group gno"><label for="no">N°</label><div class="gin"><input id="no" value="2" readonly></div></div>
        <div class="group gdesc"><label for="desc">Description de la section</label><div class="gin"><input id="desc" value="LA 100x65x10" readonly></div></div>
      </div>
      <div class="group gprops"><h2>Propriétés de section</h2>
        <div class="scrollarea">
          <table class="props">
            <colgroup><col class="p1"><col class="p2"><col class="p3"><col class="p4"><col></colgroup>
            <thead><tr><th>Description</th><th>Symbole</th><th>Valeur</th><th>Unité</th><th></th></tr></thead>
            <tbody>
            <tr><td>Aire de section</td><td>A</td><td>16.25</td><td>cm<sup>2</sup></td><td></td></tr>
            <tr><td></td><td>A<sub>tot</sub></td><td>16.25</td><td>cm<sup>2</sup></td><td></td></tr>
            <tr><td>Aires de cisaillement</td><td>A<sub>u</sub></td><td>5.51</td><td>cm<sup>2</sup></td><td></td></tr>
            <tr><td></td><td>A<sub>v</sub></td><td>7.81</td><td>cm<sup>2</sup></td><td></td></tr>
            <tr><td></td><td>A<sub>y</sub></td><td>3.27</td><td>cm<sup>2</sup></td><td></td></tr>
            <tr><td></td><td>A<sub>z</sub></td><td>7.14</td><td>cm<sup>2</sup></td><td></td></tr>
            <tr><td>Position du centre de gravité</td><td>y<sub>S,0</sub></td><td>2.30</td><td>cm</td><td>par rapport au</td></tr>
            <tr><td></td><td>z<sub>S,0</sub></td><td>3.07</td><td class="focus">cm</td><td></td></tr>
            <tr><td>Position du centre de gravité (po</td><td>y<sub>C,G,0</sub></td><td>2.30</td><td>cm</td><td></td></tr>
            <tr><td></td><td>z<sub>C,G,0</sub></td><td>3.07</td><td>cm</td><td></td></tr>
            <tr><td>Moments d'inertie</td><td>I<sub>y</sub></td><td>180.39</td><td>cm<sup>4</sup></td><td>par rapport au</td></tr>
            <tr><td></td><td>I<sub>z</sub></td><td>65.05</td><td>cm<sup>4</sup></td><td></td></tr>
            <tr><td></td><td>I<sub>yz</sub></td><td>-64.74</td><td>cm<sup>4</sup></td><td></td></tr>
            <tr><td>Défaut d'aplomb des axes princi</td><td>α</td><td>24.15</td><td>°</td><td>dans le sens</td></tr>
            </tbody>
          </table>
          <div class="vscroll"><svg><use href="#cu"/></svg><span class="thumb"></span><svg><use href="#cd"/></svg></div>
        </div>
        <div class="hscroll"><svg><use href="#cl"/></svg><span class="thumb"></span><svg><use href="#cr"/></svg></div>
      </div>
    </div>
    <div class="preview">
      <svg width="266" height="340" viewBox="1195 284 266 340">
        <path d="M1211.500 284v340M1195 315.500h266" stroke="#f2f2f2"/>
        <path d="M1241 301h190v29h-190z" fill="url(#hTop)"/><path d="M1226 315h29v291h-29z" fill="url(#hSide)"/>
        <path d="M1240.500 301.500h190v29h-190zM1226.500 315.500h29v291h-29z" fill="none" stroke="#999"/>
        <path d="M1211 315.500h34" stroke="#0d0" stroke-width="2"/><path d="M1243 313l10 2.500-10 2.500z" fill="#0a0"/>
        <path d="M1211.500 315v34" stroke="#00e" stroke-width="2"/><path d="M1209 347h5l-2 11z" fill="#00c"/>
        <text x="1260" y="320" class="ax" fill="#3f3">Y</text><text x="1208" y="370" class="ax" fill="#22e">Z</text>
        <path fill="#0ee" d="M1239 299h4v4h-4zM1333 299h4v4h-4zM1429 299h4v4h-4zM1429 328h4v4h-4zM1333 328h4v4h-4zM1239 328h4v4h-4zM1224 313h4v4h-4zM1253 313h4v4h-4zM1224 459h4v4h-4zM1253 459h4v4h-4zM1224 605h4v4h-4zM1253 605h4v4h-4z"/>
        <circle cx="1211.500" cy="315.500" r="2.800" fill="#e00"/><circle cx="1240.500" cy="606" r="2" fill="#700"/><circle cx="1430.500" cy="315.500" r="1.500" fill="#700"/>
      </svg>
    </div>
  </div>
  <div class="dfoot">
    <button class="sq" aria-label="Aide"><svg class="ic"><use href="#help"/></svg></button><button class="sq" aria-label="Commentaire"><svg class="ic"><use href="#edit"/></svg></button><button class="sq" aria-label="Décimales"><svg class="ic"><use href="#dec"/></svg></button>
    <button class="btn ok">OK</button><button class="btn">Annuler</button>
  </div>
</div>
</div>

<footer class="status"><span>SAISIE</span><span class="raised">GRILLE</span><span class="cards">CARTES</span><span>SAISIE D'OB.</span><span>GLIGNES</span><span>DXF</span><i class="s1"></i><i class="s2"></i><i class="s3"></i></footer>
</body>
</html>
```
FILE: styles.css
```css
* { box-sizing: border-box; }
body {
  margin: 0; height: 100vh; display: flex; flex-direction: column; overflow: hidden;
  background: #d0d4dd; color: #000;
  font: 11px/16px "Open Sans", "Noto Sans", sans-serif;
}
button, input, select { font: inherit; color: inherit; margin: 0; }
button { padding: 0; border: 0; background: none; }
ul { list-style: none; margin: 0; padding: 0; }
.defs { display: none; }
.paints { position: absolute; width: 0; height: 0; }
.ic { width: 16px; height: 16px; flex: none; }
.logo { width: 16px; height: 12px; flex: none; }

/* window title */
.titlebar { display: flex; align-items: center; height: 23px; flex: none; background: #fff; padding-left: 2px; color: #999; }
.title { margin-left: 5px; flex: 1; }
.cap { width: 46px; height: 20px; color: #777; }
.cap svg { width: 10px; height: 10px; }

/* menu */
.menubar { display: flex; align-items: center; height: 24px; flex: none; gap: 16px; color: #3c3f46; }
.menubar .grip { margin-right: -16px; }
.menubar .logo { margin-right: -6px; }
.mdi { display: flex; gap: 8px; margin-left: auto; padding-right: 5px; color: #555; }
.mdi svg { width: 8px; height: 8px; }
.grip { width: 10px; height: 19px; flex: none; background: repeating-linear-gradient(#fff 0 2px, #b4b8c0 2px 4px) 4px 2px / 2px 16px no-repeat; }

/* toolbars */
.bars { flex: none; border-bottom: 2px solid #808080; }
.barrow { display: flex; gap: 2px; height: 26px; }
.bar { display: flex; align-items: center; height: 26px; padding-right: 2px; border-radius: 0 4px 4px 0; border-bottom: 1px solid #b4b8c2; background: linear-gradient(#eaeef7, #dde2ed); }
.barrow:last-child .bar:not(:last-child) { padding-right: 0; }
.tb { width: 22px; height: 22px; flex: none; display: grid; place-items: center; border: 1px solid transparent; }
.tb svg { width: 16px; height: 16px; overflow: visible; }
.tb.wide { width: 24px; }
.tb.wide svg { width: 20px; }
.flip svg { transform: scaleX(-1); }
.tb.on { border-color: #9c8a66; background: linear-gradient(#fdd9a0, #fff0d0); }
.tb.sel { border-color: #b08a40; background: linear-gradient(#fbb450, #fdd890); }
.tb.pale { border-color: #a8b4b8; background: #dde6e6; }
.sig text { font: 9px "Liberation Sans", sans-serif; fill: #888; }
.sep { width: 8px; height: 14px; flex: none; background: linear-gradient(90deg, #aaaeb8 50%, #fff 50%) 3px 0 / 2px 14px no-repeat; }
.drop { width: 12px; height: 4px; flex: none; }
.drop::before, .combo::after { content: ""; display: block; width: 0; margin-left: 3px; border: 3px solid transparent; border-top: 4px solid #666; border-bottom: 0; }
.combo { position: relative; margin: 0 3px 0 2px; width: 153px; height: 19px; flex: none; }
.combo select { display: block; width: 100%; height: 19px; border: 1px solid #a0a0a0; border-radius: 0; background: #f0f0f0; appearance: none; }
.combo::after { position: absolute; right: 4px; top: 7px; }

/* workspace */
.work { position: relative; flex: 1; min-height: 0; display: grid; grid-template-columns: 221px 1fr; }
.navi { display: flex; flex-direction: column; min-width: 0; padding: 0 4px 4px 0; }
.navhead { display: flex; align-items: center; height: 18px; padding: 0 6px 0 4px; background: #e2e7f1; color: #33363c; border-radius: 3px 3px 0 0; }
.navhead span { flex: 1; white-space: nowrap; }
.navhead svg { width: 9px; height: 9px; margin-left: 8px; color: #555; }
.treebox { flex: 1; min-height: 0; display: flex; flex-direction: column; padding: 1px 3px 3px 0; border: 1px solid #8e949e; border-left: 2px solid #e2e7f1; background: #fff; }
.tree { flex: 1; min-height: 0; overflow: hidden; background: #fbfbf2; border: 1px solid #888; border-width: 1px 0 0 1px; white-space: nowrap; }
.row { display: flex; align-items: center; height: 18px; gap: 5px; position: relative; }
.row.root { padding-left: 4px; }
.tree > ul { padding-left: 8px; }
.tree li { position: relative; }
.tree li > ul { padding-left: 19px; }
.tree li::before { content: ""; position: absolute; left: 4px; top: 0; bottom: 0; border-left: 1px dotted #666; }
.tree li:last-child::before { bottom: auto; height: 9px; }
.row::before { content: ""; position: absolute; left: 5px; width: 11px; top: 9px; border-top: 1px dotted #666; }
.root::before { display: none; }
.leaf { padding-left: 15px; }
.ex { position: relative; width: 9px; height: 9px; flex: none; margin-right: 1px; border: 1px solid #888; border-radius: 1px; background: #fff; color: #24489c; font: 10px/7px "Liberation Sans", sans-serif; text-align: center; }
.row .ic { position: relative; }
.hscroll { display: flex; align-items: center; height: 15px; background: #f0f0f0; flex: none; }
.hscroll svg, .vscroll svg { width: 9px; height: 9px; flex: none; margin: 0 4px; }
.hscroll .thumb { height: 15px; background: #cdcdcd; }
.hscroll svg:last-child { margin-left: auto; }
.treebox .thumb { width: 149px; }
.navtabs { display: flex; height: 20px; flex: none; color: #4a4d55; margin-left: 3px; }
.navtabs button { display: flex; align-items: center; gap: 3px; height: 19px; padding: 0 3px; margin-right: 4px; white-space: nowrap; }
.navtabs .cur { background: #f6fafb; border-radius: 0 0 4px 4px; }

.right { display: flex; flex-direction: column; min-width: 0; min-height: 0; }
.canvas { flex: 1; min-height: 0; background: #fff; overflow: hidden; border: solid #777; border-width: 0 0 0 2px; margin-right: 1px; }
.drawing { display: block; }
.lab { font: 9px "Liberation Sans", sans-serif; }
.ax { font: 11px "Liberation Sans", sans-serif; }
.org { font: bold 10px "Liberation Sans", sans-serif; fill: #00007c; }
.cg { font: bold 11px "Liberation Sans", sans-serif; fill: #e0e; }

.panel { flex: none; margin-top: 5px; background: #f0f0f0; font: 11px/14px "Liberation Sans", sans-serif; }
.phead { display: flex; align-items: center; height: 18px; padding: 0 6px 0 4px; background: #b8c0ca; color: #33363c; font: 11px/16px "Open Sans", sans-serif; }
.phead span { flex: 1; }
.phead svg { width: 9px; height: 9px; margin-left: 8px; color: #444; }
.ptools { display: flex; align-items: center; height: 26px; padding-left: 9px; background: linear-gradient(#f0f3fa, #d4d9e4); }
.gridbox { border: 1px solid #666; border-bottom: 1px solid #777; padding: 2px 2px 5px; }
.grid { width: 100%; border-collapse: collapse; table-layout: fixed; }
.g0 { width: 45px; } .gA { width: 192px; } .gB { width: 72px; } .gC { width: 84px; } .gD { width: 60px; }
.grid th, .grid td { padding: 0 4px; border: 1px solid #999; font-weight: 400; white-space: nowrap; overflow: hidden; }
.grid .letters th { height: 14px; background: #e1e1e1; line-height: 12px; }
.grid .names th { height: 33px; padding-bottom: 2px; vertical-align: bottom; }
.grid td { height: 16px; background: #fff; line-height: 12px; }
.grid .rh { background: #e1e1e1; }
.grid .letters .act, .grid .act { background: #0078d7; color: #fff; }
.grid .empty td { height: 61px; background: #f0f0f0; border-bottom: 0; }
.grid .empty .rh { background: #e1e1e1; }
.num { text-align: right; }
sub, sup { font-size: 10px; line-height: 0; margin-left: 1px; }
sub { vertical-align: -2px; }
sup { vertical-align: 3px; }
.tabs { display: flex; height: 37px; align-items: flex-start; }
.tabs button { height: 17px; padding: 0 1px 0 2px; background: #e6e6e6; border: solid #666; border-width: 0 1px 1px 0; border-radius: 0 0 4px 4px; }
.tabs .cur { background: #f0f0f0; margin-top: -1px; height: 18px; padding: 0 2px 0 3px; }

/* dialog */
.dialog { position: absolute; left: 749px; top: 148px; width: 721px; background: #f0f0f0; border: 1px solid #c8c8c8; border-top: 0; box-shadow: 1px 2px 6px rgba(0,0,0,.25); font: 11px/14px "Liberation Sans", sans-serif; }
.dhead { display: flex; align-items: center; height: 25px; padding: 0 10px 0 3px; margin: 0 -1px; background: #0078d7; color: #fff; font: 11px/16px "Open Sans", sans-serif; }
.dhead span { flex: 1; }
.dhead svg { display: block; width: 11px; height: 11px; }
.dbody { display: flex; gap: 7px; margin: 0 7px; padding: 9px 0 8px; border-bottom: 1px solid #999; }
.dleft { width: 430px; flex: none; display: flex; flex-direction: column; gap: 9px; }
.pair { display: flex; gap: 8px; }
.group { position: relative; background: #f8f8f8; border: solid #b4b4f0; border-width: 0 1px 1px 0; }
.group label, .group h2 { display: block; height: 16px; margin: 0 -1px 0 0; padding: 1px 2px; color: #1a1a80; font-size: 12px; font-weight: 400; background: #dce6ff; clip-path: polygon(0 0, calc(100% - 14px) 0, 100% 100%, 0 100%); }
.gno { width: 53px; }
.gdesc { flex: 1; }
.gin { padding: 4px 3px 6px; }
.gin input { display: block; width: 100%; height: 20px; padding: 0 3px; border: 1px solid #7a7a7a; background: #f0f0f0; font-size: 12px; outline: 0; }
.gdesc input { width: 262px; }
.gprops { background: #f0f0f0; }
.scrollarea { display: flex; }
.props { flex: none; width: 412px; height: 246px; border-collapse: collapse; table-layout: fixed; border-right: 0; }
.p1 { width: 166px; } .p2 { width: 67px; } .p3 { width: 68px; } .p4 { width: 43px; }
.props th, .props td { padding: 0 4px; height: 16px; line-height: 12px; border: 1px solid #a0a0a0; font-weight: 400; white-space: nowrap; overflow: hidden; text-align: left; }
.props th { text-align: center; }
.props tr > :last-child { border-right: 0; padding-right: 0; padding-left: 3px; }
.props td:nth-child(3) { text-align: right; }
.props .focus { outline: 1px solid #000; outline-offset: -1px; }
.vscroll { width: 15px; margin-left: 1px; display: flex; flex-direction: column; align-items: center; background: #f0f0f0; padding: 4px 0; gap: 4px; }
.vscroll .thumb { width: 15px; height: 38px; background: #cdcdcd; }
.vscroll svg:last-child { margin-top: auto; }
.gprops .hscroll { margin: 7px 1px 1px; }
.gprops .hscroll .thumb { width: 282px; }
.preview { flex: 1; background: #fff; border: solid #a0a0a0; border-width: 1px 0 0 1px; overflow: hidden; }
.preview svg { display: block; }
.dfoot { display: flex; gap: 10px; padding: 11px 7px 9px 8px; }
.sq { width: 25px; height: 22px; display: grid; place-items: center; border: 1px solid #adadad; background: #e1e1e1; }
.btn { width: 75px; height: 22px; border: 1px solid #adadad; background: #e1e1e1; font-size: 12px; }
.ok { margin-left: auto; border: 2px solid #0078d7; }

/* status bar */
.status { flex: none; display: flex; gap: 2px; height: 21px; padding: 1px 73px 0 0; justify-content: flex-end; border-top: 1px solid #aaa; background: linear-gradient(#dfe2e8, #a8aeb8 50%, #b8bdc6); color: #222; font: 11px/16px "Liberation Sans", sans-serif; }
.status span { height: 19px; padding: 0 1px; border: 1px solid #fff; border-color: #111 #fff #fff #111; white-space: nowrap; }
.status .raised { border-color: #eee #999 #999 #eee; }
.status .cards { padding: 0 4px; }
.status i { height: 16px; border-right: 1px solid #8e939c; }
.s2 { width: 151px; } .s3 { width: 74px; }
```
